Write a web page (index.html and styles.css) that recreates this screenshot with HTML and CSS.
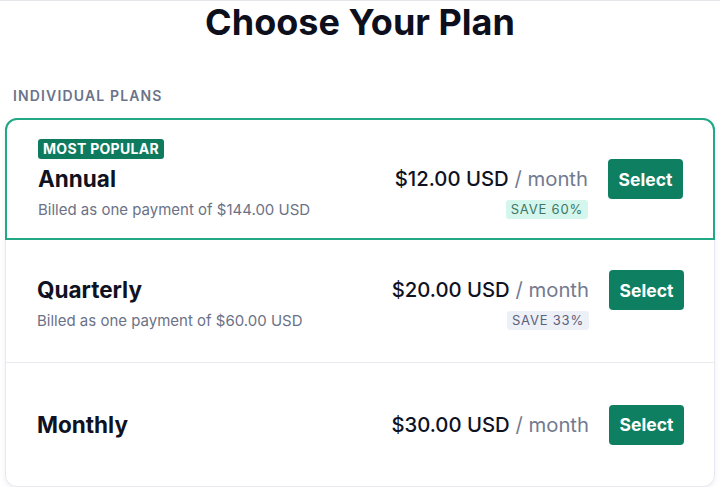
FILE: index.html
```html
<!DOCTYPE html>
<html lang="en">
<head>
<meta charset="utf-8">
<title>Choose Your Plan</title>
<link rel="stylesheet" href="styles.css">
</head>
<body>
<div class="page">
  <h1 class="title">Choose Your Plan</h1>
  <h2 class="section-label">INDIVIDUAL PLANS</h2>
  <div class="plans">
    <div class="plan plan-featured">
      <span class="tag">MOST POPULAR</span>
      <div class="name">Annual</div>
      <div class="price"><strong>$12.00 USD</strong> <span class="per">/ month</span></div>
      <button class="btn">Select</button>
      <div class="billed">Billed as one payment of $144.00 USD</div>
      <span class="save save-green">SAVE 60%</span>
    </div>
    <div class="plan plan-divided">
      <div class="name">Quarterly</div>
      <div class="price"><strong>$20.00 USD</strong> <span class="per">/ month</span></div>
      <button class="btn">Select</button>
      <div class="billed">Billed as one payment of $60.00 USD</div>
      <span class="save save-gray">SAVE 33%</span>
    </div>
    <div class="plan plan-last">
      <div class="name">Monthly</div>
      <div class="price"><strong>$30.00 USD</strong> <span class="per">/ month</span></div>
      <button class="btn">Select</button>
    </div>
  </div>
</div>
</body>
</html>
```
FILE: styles.css
```css
* { box-sizing: border-box; }
html, body { margin: 0; padding: 0; background: #ffffff; }
body {
  font-family: Inter, "Noto Sans", "Liberation Sans", sans-serif;
  color: #0f1222;
}
.page {
  border-top: 1px solid #e4e6ea;
  padding: 0 5px;
}
.title {
  margin: 0;
  text-align: center;
  font-size: 36px;
  line-height: 43px;
  font-weight: 700;
  color: #0d0f1c;
}
.section-label {
  margin: 43px 0 0 8px;
  font-size: 14px;
  line-height: 17px;
  font-weight: 600;
  letter-spacing: 1.15px;
  color: #6b7389;
}
.plans {
  margin-top: 14px;
  border: 1px solid #e7e8f1;
  border-radius: 12px;
  box-shadow: 0 2px 5px rgba(120, 120, 170, 0.12);
  background: #fff;
}
.plan {
  display: grid;
  grid-template-columns: 1fr auto auto;
  column-gap: 20px;
  align-content: center;
  align-items: center;
  height: 122px;
  padding: 0 30px 0 31px;
}
.plan-featured {
  margin: -1px -1px 0 -1px;
  border: 2px solid #22a884;
  border-radius: 12px 12px 0 0;
}
.plan-divided {
  height: 123px;
  padding-bottom: 2px;
  border-bottom: 1px solid #ebecf2;
}
.plan-last {
  height: 123px;
}
.tag {
  grid-row: 1;
  grid-column: 1;
  justify-self: start;
  background: #0e7b5e;
  color: #fff;
  font-size: 14px;
  font-weight: 700;
  line-height: 20px;
  padding: 0 5px;
  border-radius: 3px;
  letter-spacing: 0.3px;
}
.name {
  grid-row: 2;
  grid-column: 1;
  font-size: 22.5px;
  font-weight: 700;
  line-height: 28px;
}
.price {
  grid-row: 2;
  grid-column: 2;
  font-size: 20.3px;
  line-height: 24px;
  white-space: nowrap;
}
.price strong { font-weight: 500; color: #0f1222; }
.per { color: #737a90; font-weight: 400; }
.btn {
  grid-row: 2;
  grid-column: 3;
  width: 75px;
  height: 40px;
  border: none;
  border-radius: 4px;
  background: #0f7f62;
  color: #fff;
  font-family: inherit;
  font-size: 17.5px;
  font-weight: 700;
  padding: 0;
}
.billed {
  grid-row: 3;
  grid-column: 1;
  font-size: 15px;
  line-height: 18px;
  color: #6b7287;
  margin-top: 2px;
}
.save {
  grid-row: 3;
  grid-column: 2;
  justify-self: end;
  margin-top: 1px;
  font-size: 13px;
  line-height: 19px;
  padding: 0 5px;
  border-radius: 3px;
  letter-spacing: 0.8px;
}
.save-green { background: #d5f6ec; color: #3b7768; }
.save-gray { background: #eef0f8; color: #5a6179; }
```
